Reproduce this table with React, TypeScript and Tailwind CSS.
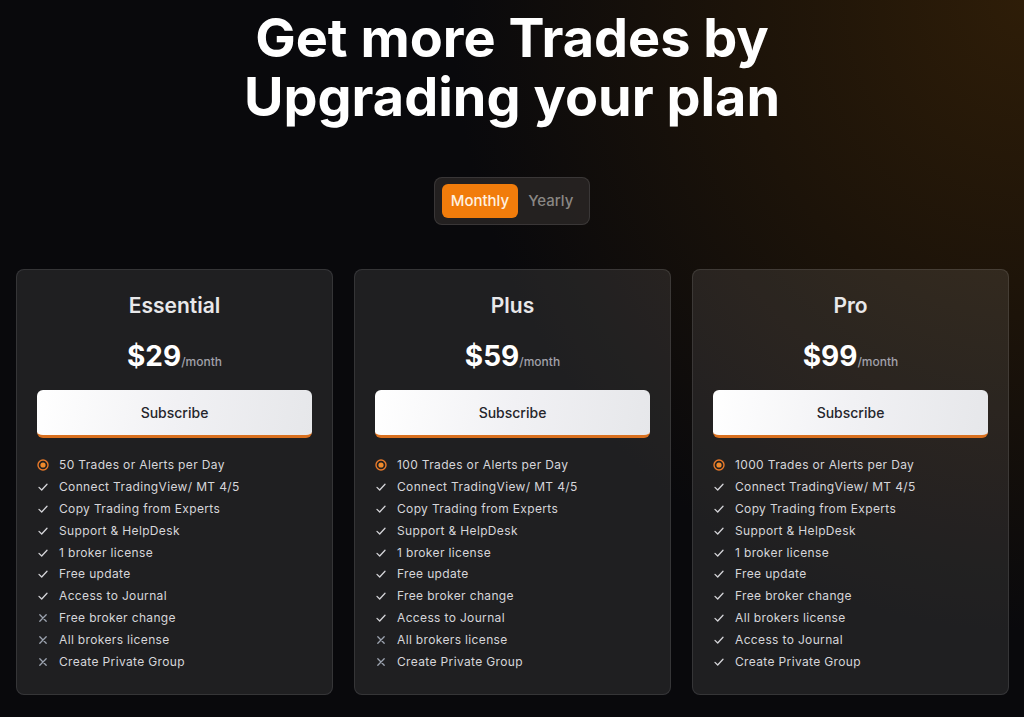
import React from "react";

type Feat = { text: string; ok: boolean; main?: boolean };

const plans: { name: string; price: string; features: Feat[] }[] = [
  {
    name: "Essential",
    price: "$29",
    features: [
      { text: "50 Trades or Alerts per Day", ok: true, main: true },
      { text: "Connect TradingView/ MT 4/5", ok: true },
      { text: "Copy Trading from Experts", ok: true },
      { text: "Support & HelpDesk", ok: true },
      { text: "1 broker license", ok: true },
      { text: "Free update", ok: true },
      { text: "Access to Journal", ok: true },
      { text: "Free broker change", ok: false },
      { text: "All brokers license", ok: false },
      { text: "Create Private Group", ok: false },
    ],
  },
  {
    name: "Plus",
    price: "$59",
    features: [
      { text: "100 Trades or Alerts per Day", ok: true, main: true },
      { text: "Connect TradingView/ MT 4/5", ok: true },
      { text: "Copy Trading from Experts", ok: true },
      { text: "Support & HelpDesk", ok: true },
      { text: "1 broker license", ok: true },
      { text: "Free update", ok: true },
      { text: "Free broker change", ok: true },
      { text: "Access to Journal", ok: true },
      { text: "All brokers license", ok: false },
      { text: "Create Private Group", ok: false },
    ],
  },
  {
    name: "Pro",
    price: "$99",
    features: [
      { text: "1000 Trades or Alerts per Day", ok: true, main: true },
      { text: "Connect TradingView/ MT 4/5", ok: true },
      { text: "Copy Trading from Experts", ok: true },
      { text: "Support & HelpDesk", ok: true },
      { text: "1 broker license", ok: true },
      { text: "Free update", ok: true },
      { text: "Free broker change", ok: true },
      { text: "All brokers license", ok: true },
      { text: "Access to Journal", ok: true },
      { text: "Create Private Group", ok: true },
    ],
  },
];

function Icon({ f }: { f: Feat }) {
  if (f.main)
    return (
      <svg width="12" height="12" viewBox="0 0 12 12">
        <circle cx="6" cy="6" r="5" fill="none" stroke="#e8792a" strokeWidth="1.4" />
        <circle cx="6" cy="6" r="2.6" fill="#f08a2c" />
      </svg>
    );
  if (f.ok)
    return (
      <svg width="12" height="12" viewBox="0 0 12 12">
        <path d="M2 6.4 L4.7 9 L10 3.2" fill="none" stroke="#d4d4d8" strokeWidth="1.3" strokeLinecap="round" strokeLinejoin="round" />
      </svg>
    );
  return (
    <svg width="12" height="12" viewBox="0 0 12 12">
      <path d="M2.8 2.8 L9.2 9.2 M9.2 2.8 L2.8 9.2" fill="none" stroke="#9ca3af" strokeWidth="1.3" strokeLinecap="round" />
    </svg>
  );
}

export default function App() {
  return (
    <div
      className="min-h-[717px] w-full bg-[#09090c] bg-[radial-gradient(ellipse_70%_110%_at_100%_0%,#2e1d08_0%,#1c1309_40%,#09090c_80%)] text-white"
      style={{ fontFamily: "Inter, 'Noto Sans', sans-serif" }}
    >
      <div className="flex flex-col items-center pt-[8px]">
        <h1 className="text-center text-[54px] font-bold leading-[59px] text-white">
          Get more Trades by
          <br />
          Upgrading your plan
        </h1>
        <div className="mt-[51px] flex items-center gap-[10px] rounded-lg border border-white/10 bg-[#2a2725]/80 p-[6px] pl-[7px] pr-[16px]">
          <div className="rounded-md bg-[#f17c0b] px-[9px] py-[7px] text-[15px] font-medium leading-[20px] text-[#fff1e0]">
            Monthly
          </div>
          <div className="text-[15px] font-medium leading-[20px] text-[#8a8784]">Yearly</div>
        </div>
      </div>

      <div className="mt-[44px] grid grid-cols-3 gap-[21px] pl-[16px] pr-[15px]">
        {plans.map((p) => (
          <div
            key={p.name}
            className="flex flex-col rounded-lg border border-white/10 bg-white/[0.09] px-[20px] pt-[22px] pb-[21px]"
          >
            <div className="text-center text-[21px] font-semibold leading-[28px] text-[#e8e8ea]">{p.name}</div>
            <div className="mt-[19px] flex items-baseline justify-center">
              <span className="text-[28px] font-bold leading-[34px] text-white">{p.price}</span>
              <span className="text-[12px] font-medium text-[#a1a1aa]">/month</span>
            </div>
            <button className="mt-[17px] h-[48px] w-full rounded-md border-b-[3px] border-[#d9701f] bg-[linear-gradient(100deg,#ffffff_0%,#f1f1f4_50%,#e6e7ea_100%)] text-[14px] font-medium text-[#26262b]">
              Subscribe
            </button>
            <ul className="mt-[16px] flex flex-col">
              {p.features.map((f) => (
                <li key={f.text} className="flex h-[21.9px] items-center gap-[10px]">
                  <span className="flex w-[12px] justify-center">
                    <Icon f={f} />
                  </span>
                  <span className="text-[12px] tracking-[0.35px] text-[#d6d6da]">{f.text}</span>
                </li>
              ))}
            </ul>
          </div>
        ))}
      </div>
    </div>
  );
}
